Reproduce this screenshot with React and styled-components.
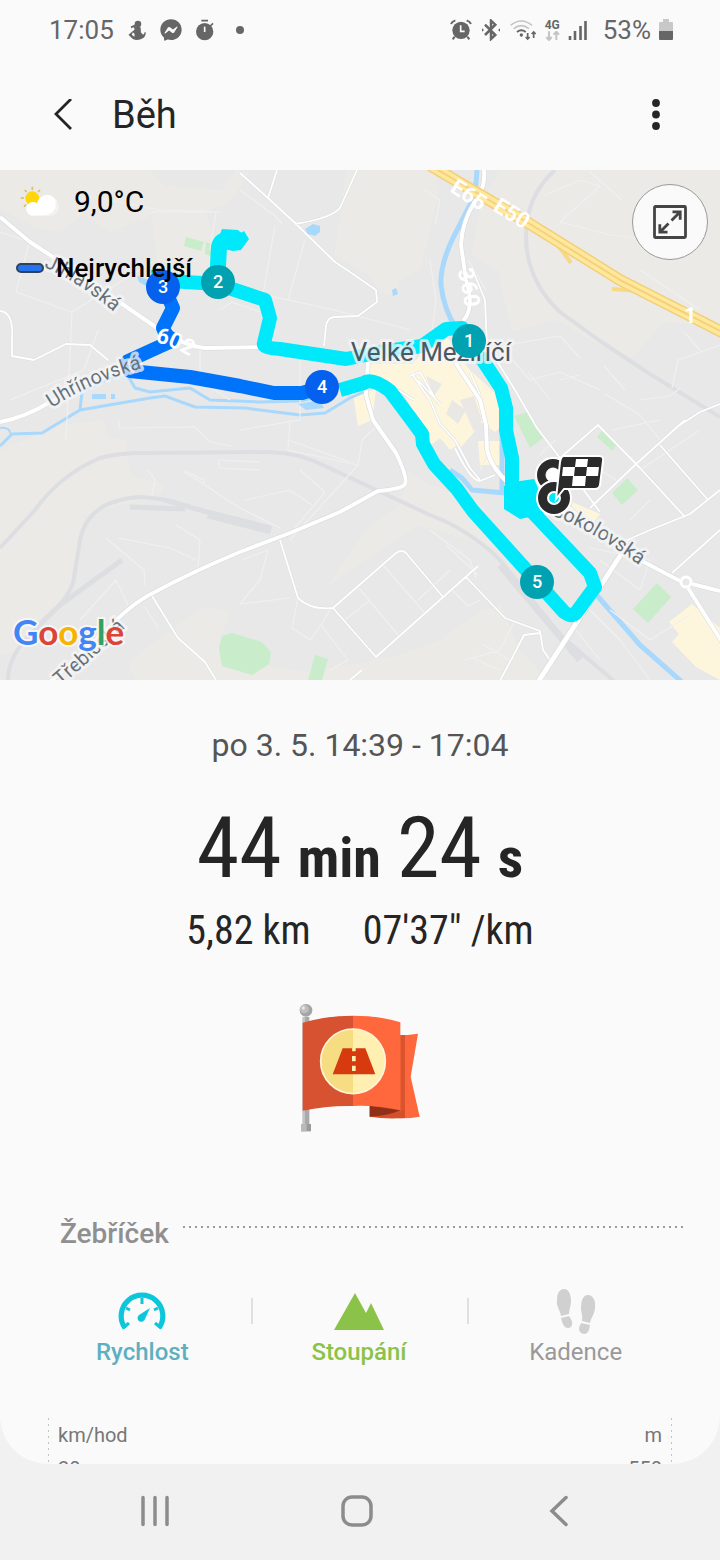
import React, { useState } from "react";
import styled, { createGlobalStyle } from "styled-components";
import { FaFacebookMessenger } from "react-icons/fa";

const creamAreas = [
  "0,170 150,170 165,186 222,190 235,170 250,172 232,200 206,212 220,262 160,300 152,215 110,232 84,215 60,232 36,228 0,208",
  "346,170 434,170 440,190 428,240 420,270 398,282 395,296 380,292 370,275 334,256 340,215",
  "500,170 720,170 720,326 664,322 632,358 598,344 556,320 512,332 498,270 472,255 480,205",
  "0,450 60,425 105,420 108,438 125,440 130,475 165,485 160,495 84,515 75,575 60,605 40,622 24,652 0,655",
  "128,662 182,622 205,607 230,612 220,640 260,665 310,672 400,655 440,640 480,612 500,604 520,650 548,680 135,680",
  "325,590 365,530 400,505 408,470 430,485 480,500 500,550 420,525 395,540 350,570",
];

const shopAreas = [
  "368,364 412,364 430,345 448,338 468,368 500,398 503,425 495,432 478,420 466,440 450,450 440,438 430,446 400,392 370,378",
  "353,394 376,390 372,420 358,426",
  "460,422 476,430 460,448",
  "478,441 500,441 500,465 480,465",
  "692,604 720,628 720,680 696,667 672,642 679,634 669,622",
  "572,502 600,514 594,522 572,508",
];

const blockAreas = [
  "380,386 402,392 410,404 396,410",
  "426,376 442,384 434,396",
  "452,400 466,410 458,424 446,414",
  "460,400 474,396 482,420 474,432",
];

const parkAreas = [
  "186,237 204,242 201,251 184,246",
  "206,242 212,244 211,256 205,254",
  "222,636 232,633 262,642 271,652 269,664 252,675 222,666 219,648",
  "315,655 328,659 322,680 308,680",
  "514,416 528,412 543,438 530,448",
  "602,431 616,445 613,451 597,437",
  "627,478 638,490 622,505 612,493",
  "657,583 671,597 648,623 633,609",
];

const faintStreets =
  "M0,232L30,242L55,262L110,300M88,196L160,210L220,212M30,240L16,292L72,312L66,440M72,312L152,262M152,212L216,212L210,250M98,330L84,370L10,400M240,190L275,216L282,224M275,226L262,300M305,240L288,300M252,292L334,310L410,330M435,225L440,200L425,190M430,260L436,300L430,345M468,260L486,290M220,310L232,302L260,312M200,345L200,380L230,400M300,345L300,420L240,430M118,420L120,428L195,427L210,442L232,446M220,460L260,462M218,460L220,468L260,470M183,470L204,480L204,484L184,472M148,470L155,480L152,495M205,485L230,502L246,511L280,528M176,525L200,540L198,568M118,538L170,548L196,560M106,538L144,570L145,586M80,620L116,580L128,605M145,607L158,628M290,420L288,450L358,465L362,440L378,425M288,440L350,462M300,470L325,492L295,528M245,500L290,490L312,505M358,465L290,540M242,560L268,550L260,580L240,604L290,598M298,598L292,628L310,640L321,625L348,660L330,670M321,625L330,610M358,587L399,636M383,565L424,612M345,620L370,600M418,600L450,570M430,530L470,560L476,578M446,545L478,575M452,590L468,606L480,600M545,195L580,180L600,186L560,222M590,172L622,200M560,222L610,235L650,240M640,270L700,310M500,345L530,380L560,372L600,390M512,344L560,336L580,358M528,372L550,400M604,366L625,390M605,394L640,415L660,440M560,380L580,375M685,333L700,350M672,388L678,360L720,345M640,400L670,396L680,388M540,455L555,440M612,430L660,420M640,470L700,430M630,520L650,500M600,470L616,480M590,548L650,560L640,590L600,560M610,610L650,640L690,615M480,470L490,450M465,660L500,650L515,620M482,644L510,660M472,658L500,670M590,610L620,640L650,680M572,625L600,660";

const minorStreets =
  "M240,173L268,198L295,223L335,262L350,272L376,290L377,302L358,316L334,317Q327,318 326,326L324,346M277,170L268,198M357,170L340,208Q332,218 295,224M0,311Q14,312 12,340L12,356L34,360L66,344L90,345L108,360M472,268L485,300L487,345L515,390L537,428L560,458L600,512M280,540L298,598Q310,610 333,608L396,553Q402,549 406,553L443,597M333,608L376,657L478,566M466,577L505,618L540,631L543,650L550,660M540,633L524,635L510,662L495,690M152,596L178,638L205,662L216,680M362,670L350,680M560,458L598,425L640,468L685,517M590,508L635,465L685,420M660,445L708,500M625,541L650,530L690,514L720,490M672,573L720,530M455,448Q470,480 480,481L495,475M412,374L430,400L440,424L455,440L470,468L480,480M418,380L440,404M410,376L420,372L436,400M680,425L700,412L720,404M470,372L480,395M398,390L414,400";

const mainRoads =
  "M0,217L30,242L70,268L160,330Q185,346 205,348L270,347M0,422Q26,417 50,402L100,375L160,345M484,170Q486,188 474,203Q462,222 461,245L466,280Q475,308 463,321M368,362L366,395L373,420L396,453Q408,478 405,484Q402,489 378,491L340,512L290,533L240,552Q190,573 155,592Q130,604 105,632L50,682M455,362L480,400L486,425L487,450Q492,470 512,486M560,500L600,535L640,560L680,581M692,584L720,591M688,588L722,642";

const rivers = [
  { d: "M477,170L475,195L453,238Q440,265 441,285Q444,310 456,328", w: 5 },
  { d: "M502,420L502,492M450,470L462,478L472,490L505,493M594,592L640,645L682,682", w: 5 },
  { d: "M0,446L12,434L42,433L80,410L115,404L150,398L165,396L195,407L245,408L300,415L325,413L350,398L366,391", w: 3 },
  { d: "M80,410L82,392L110,378L127,374L135,388L150,392L190,388L210,400L260,402L300,401L330,394", w: 3 },
  { d: "M0,428Q10,426 11,436", w: 2 },
];

const railways = [
  { d: "M555,170Q526,196 526,236Q526,280 560,312L600,341L650,374L720,417", w: 4 },
  { d: "M0,548L35,510Q60,475 100,458Q118,453 145,453L270,452Q300,453 325,466L430,515Q470,530 500,560L560,635L615,682", w: 4 },
  { d: "M8,680Q8,660 25,640L55,610Q72,592 74,578L80,540Q88,500 140,497Q165,498 185,506", w: 4 },
  { d: "M130,507L185,509M165,500L270,530", w: 5 },
  { d: "M208,514L271,530", w: 9 },
  { d: "M40,624L60,605L122,560", w: 5 },
  { d: "M500,565L580,660", w: 7 },
];

const highway = "M428,164L460,183L530,224L620,280L726,334";

const kilometres = [
  { number: 1, x: 469, y: 341, color: "#00a2b2" },
  { number: 2, x: 218, y: 282, color: "#00a2b2" },
  { number: 3, x: 163, y: 287, color: "#0560ee" },
  { number: 4, x: 322, y: 387, color: "#0560ee" },
  { number: 5, x: 537, y: 582, color: "#00a2b2" },
];

const RunnerIcon = () => (
  <svg width="18" height="20" viewBox="388 57 54 61" fill="#666" aria-hidden="true">
    <circle cx="418" cy="69" r="10" />
    <path d="M396 77l14-7 3 6-16 6zM411 77l15 2 1 16 6 6q4 2 5-7h4q0 14-12 20-8 4-18 4-10-1-14-7l-9-9 9-8q6-4 10-8l-3-8z" />
    <path d="M402 95q8 2 5 13l-8-6z" fill="#fafafa" />
  </svg>
);

const StopwatchIcon = () => (
  <svg width="18" height="22" viewBox="587 55 54 66" aria-hidden="true">
    <circle cx="613" cy="93" r="26" fill="#666" />
    <path d="M603 60h20M630 76l8-8" stroke="#666" strokeWidth="5" />
    <path d="M613 78v16" stroke="#fafafa" strokeWidth="5" />
  </svg>
);

const AlarmIcon = () => (
  <svg width="22" height="22" viewBox="270 55 66 66" aria-hidden="true">
    <circle cx="303" cy="89" r="26" fill="#666" />
    <path d="M273 70q3-8 13-11M333 70q-3-8-13-11M284 108l-6 8M322 108l6 8" stroke="#666" strokeWidth="6" fill="none" />
    <path d="M302 74v18h12" stroke="#fafafa" strokeWidth="5" fill="none" />
  </svg>
);

const BluetoothIcon = () => (
  <svg width="22" height="22" viewBox="360 55 66 66" fill="none" aria-hidden="true">
    <path d="M375 72l31 31-13 12V60l13 12-31 31" stroke="#666" strokeWidth="7.500" />
    <path d="M366 83l6 5-6 5zM420 83l-6 5 6 5z" fill="#666" />
  </svg>
);

const WifiIcon = () => (
  <svg width="27" height="22" viewBox="449 53 81 66" fill="none" aria-hidden="true">
    <path d="M451 72q32-26 64 0M460 82q23-18 46 0" stroke="#c4c4c4" strokeWidth="5" />
    <path d="M470 92q13-10 26 0" stroke="#666" strokeWidth="6" />
    <circle cx="483" cy="101" r="5" fill="#666" />
    <path d="M502 95v18M496 107l6 6 6-6M520 110v-18M514 98l6-6 6 6" stroke="#666" strokeWidth="5" />
  </svg>
);

const MobileDataArrows = () => (
  <svg width="15" height="10" viewBox="556 93 45 30" fill="none" aria-hidden="true">
    <path d="M568 94v25M560 111l8 9 8-9M590 120v-25M582 104l8-9 8 9" stroke="#c4c4c4" strokeWidth="6" />
  </svg>
);

const SignalIcon = () => (
  <svg width="19" height="20" viewBox="0 0 19 20" aria-hidden="true">
    <path d="M2 16v4M7 11v9M12.500 6v14M17.500 1v19" stroke="#666" strokeWidth="2.600" />
  </svg>
);

const BatteryIcon = () => (
  <svg width="14" height="22" viewBox="0 0 14 22" aria-hidden="true">
    <path d="M4 0h6v3h3a1 1 0 0 1 1 1v8H0V4a1 1 0 0 1 1-1h3z" fill="#c8c8c8" />
    <path d="M0 12h14v8a1 1 0 0 1-1 1H1a1 1 0 0 1-1-1z" fill="#666" />
  </svg>
);

const BackIcon = () => (
  <svg width="20" height="32" viewBox="0 0 20 32" fill="none" aria-hidden="true">
    <path d="M19 0L4 15l15 15" stroke="#252525" strokeWidth="2.800" />
  </svg>
);

const MoreIcon = () => (
  <svg width="8" height="32" viewBox="0 0 8 32" fill="#252525" aria-hidden="true">
    <circle cx="4" cy="4" r="3.900" />
    <circle cx="4" cy="15.500" r="3.900" />
    <circle cx="4" cy="27" r="3.900" />
  </svg>
);

const WeatherIcon = () => (
  <svg width="40" height="32" viewBox="58 64 120 96" aria-hidden="true">
    <path d="M95 66v10M72 76l6 6M60 100h10M70 126l6-6M118 76l-6 6M129 99h-8" stroke="#dfbf56" strokeWidth="5" />
    <circle cx="95" cy="101" r="21" fill="#ffd60a" />
    <path d="M97 153a20 20 0 0 1 0-41q8 0 12 4a31 31 0 1 1 34 37z" fill="#fff" />
    <path d="M116 151q36 4 48-20 4-12-2-24 14 12 12 26-4 18-24 20H98z" fill="#f4f2ef" />
  </svg>
);

const ExpandIcon = () => (
  <svg width="34" height="34" viewBox="0 0 34 34" fill="none" stroke="#444" aria-hidden="true">
    <rect x="1.500" y="1.500" width="31" height="31" rx="1" strokeWidth="2.800" />
    <path d="M18.500 15.500l8-8M19.500 6.800h7.700v8M15.500 18.500l-8 8M14.500 27.200H6.800v-8" strokeWidth="2.800" />
  </svg>
);

const FlagBadge = () => (
  <svg width="122" height="130" viewBox="55 38 366 390" role="img" aria-label="Odznak vzdálenosti">
    <path d="M66 80h20v325H66z" fill="#a9a9a9" />
    <path d="M66 80h7v325h-7z" fill="#c4c4c4" />
    <path d="M61 401h30v22H61z" fill="#9a9a9a" />
    <path d="M61 401h17v22H61z" fill="#b9b9b9" />
    <circle cx="76" cy="60" r="19" fill="#a5a5a5" />
    <circle cx="71" cy="56" r="13" fill="#bfbfbf" />
    <circle cx="68" cy="53" r="5" fill="#e6e6e6" />
    <path d="M350 135q32 0 62-5l-22 129 27 120q-40 7-67 4z" fill="#ff673c" />
    <path d="M359 134h14v249h-14z" fill="#d9532d" />
    <path d="M267 346h92v18l14-4v23q-60 4-106-4z" fill="#d4502a" />
    <path d="M267 346l92 14q-40 18-92 19z" fill="#903018" />
    <path d="M66 97q74-21 151-21v271q-76-2-151 14z" fill="#d65230" />
    <path d="M217 76q80 0 142 20v264q-72-16-142-13z" fill="#ff673c" />
    <circle cx="217" cy="213" r="97" fill="#f7dd82" />
    <path d="M217 116a97 97 0 0 1 0 194z" fill="#ffefb0" />
    <circle cx="217" cy="213" r="97" fill="none" stroke="#fff5dc" strokeWidth="5" />
    <path d="M186 174h28v9h11v-9h29l30 78H156z" fill="#d63a0e" />
    <path d="M214 197h11v16h-11zM214 226h11v16h-11z" fill="#ffefb0" />
  </svg>
);

const SpeedIcon = () => (
  <svg width="48" height="40" viewBox="0 0 48 40" fill="none" aria-hidden="true">
    <path d="M7 36A20.800 20.800 0 1 1 41 36" stroke="#0cc7dc" strokeWidth="5.200" />
    <path d="M24 6v6M8 16l4 2M40 16l-4 2M5 36l6-5M43 36l-6-5" stroke="#0cc7dc" strokeWidth="3" />
    <path d="M32 16l-5 11a3.800 3.800 0 1 1-6-4z" fill="#0cc7dc" />
  </svg>
);

const ClimbIcon = () => (
  <svg width="50" height="38" viewBox="0 0 50 38" fill="#8bc34a" aria-hidden="true">
    <path d="M0 37L21 0l11 20 5-10 13 27z" />
  </svg>
);

const StepsIcon = () => (
  <svg width="40" height="46" viewBox="0 0 40 46" fill="#d0d0d0" aria-hidden="true">
    <path d="M8 0c5 0 7 6 7 12 0 5-2 8-2 13L5 27C4 21 0 17 1 11 1 5 3 0 8 0zM5 29l8-2q4 5 3 9-1 3-4 3-5 0-7-10z" />
    <path d="M32 6c5 0 8 6 7 12 0 7-4 10-5 16l-8-2c1-5-1-8-1-13 0-7 2-13 7-13zM25 34l9 2q-1 9-6 9-5-1-5-5 0-2 2-6z" />
  </svg>
);

const tabs = [
  { key: "speed", label: "Rychlost", color: "#5eb0bf", weight: 500, icon: SpeedIcon },
  { key: "climb", label: "Stoupání", color: "#8bc34a", weight: 500, icon: ClimbIcon },
  { key: "cadence", label: "Kadence", color: "#999", weight: 400, icon: StepsIcon },
];

const RouteMap = () => (
  <MapDrawing viewBox="0 170 720 510" role="img" aria-label="Mapa trasy, Velké Meziříčí">
    <defs>
      <path id="jihlavska" d="M44,267Q80,282 126,322" />
      <path id="uhrinovska" d="M52,408Q92,381 150,366" />
      <path id="sokolovska" d="M551,515Q602,534 658,580" />
      <path id="trebicska" d="M61,686Q98,654 146,608" />
      <path id="road602" d="M155,342Q178,347 204,366" />
      <path id="road360" d="M457,271Q464,290 466,322" />
      <path id="e65" d="M449,191L496,221" />
      <path id="e50" d="M492,210L544,242" />
    </defs>
    <rect y="170" width="720" height="510" fill="#e8e8e8" />
    {creamAreas.map((points) => (
      <polygon key={points} points={points} fill="#ebeae6" />
    ))}
    {shopAreas.map((points) => (
      <polygon key={points} points={points} fill="#fef6dc" />
    ))}
    {blockAreas.map((points) => (
      <polygon key={points} points={points} fill="#e9e8e5" />
    ))}
    {parkAreas.map((points) => (
      <polygon key={points} points={points} fill="#c9ecca" />
    ))}
    <g fill="none" strokeLinejoin="round">
      {railways.map((rail) => (
        <path key={rail.d} d={rail.d} stroke="#dddee1" strokeWidth={rail.w} />
      ))}
      {rivers.map((river) => (
        <path key={river.d} d={river.d} stroke="#a9d8fd" strokeWidth={river.w} />
      ))}
      <path d={faintStreets} stroke="#f0f0f0" strokeWidth="1.200" />
      <path d={minorStreets} stroke="#dcdee0" strokeWidth="2.800" />
      <path d={minorStreets} stroke="#fff" strokeWidth="1.800" />
      <path d={mainRoads} stroke="#d5d7da" strokeWidth="5" />
      <path d="M622,553L538,682" stroke="#d5d7da" strokeWidth="6" />
      <path d={mainRoads} stroke="#fff" strokeWidth="4" />
      <path d="M622,553L538,682" stroke="#fff" strokeWidth="5" />
      <circle cx="686" cy="582" r="5" fill="#e8e8e8" stroke="#fff" strokeWidth="3" />
      <path d="M558,245L571,263M612,289L640,291" stroke="#f8d983" strokeWidth="4" />
      <path d={highway} stroke="#f3cf78" strokeWidth="12" />
      <path d={highway} stroke="#ffe79b" strokeWidth="9" />
      <path d={highway} stroke="#f3d27e" strokeWidth="2" />
    </g>
    <path d="M305,229l8-5 7 2v6l-5 4-7-2zM392,290l4-2 2 6-5 2zM92,394h14v5H92zM111,394h4v5h-4zM298,404l22-4 4 8-18 2zM137,276l12 4 4 10-14-8z" fill="#a9d8fd" />
    <RouteLine d="M158,270Q158,280 170,281L217,284L265,300L270,318L264,343Q262,348 280,349L346,359L380,352L422,346L446,329L462,328L476,350L501,388L506,408L506,430L512,458L512,492" color="#00e9fb" />
    <RouteLine d="M217,284L219,247Q221,237 240,240" color="#00e9fb" $width={16} />
    <path d="M222,229l16 1 3 3 3-2 5 8-8 11-8 1-18-4z" fill="#00e9fb" />
    <RouteLine d="M523,502L590,573L595,587L576,613Q572,618 564,612L537,582L473,511L457,489L434,464L423,444L422,434L411,419L390,391Q372,377 364,383L340,390" color="#00e9fb" />
    <path d="M504,486l16-5 14-2 8 18 2 20-14 0-10 2-16-10z" fill="#00e9fb" />
    <RouteLine d="M165,290L173,308L163,328Q166,337 174,340L128,361L130,371L190,377L240,386L274,393H302L322,387" color="#0073fb" />

    <RoadNumber>
      <textPath href="#road602">602</textPath>
    </RoadNumber>
    <RoadNumber>
      <textPath href="#road360">360</textPath>
    </RoadNumber>
    <RoadNumber>
      <textPath href="#e65">E65</textPath>
    </RoadNumber>
    <RoadNumber>
      <textPath href="#e50">E50</textPath>
    </RoadNumber>
    <RoadNumber x="684" y="323">1</RoadNumber>
    <StreetName>
      <textPath href="#jihlavska">Jihlavská</textPath>
    </StreetName>
    <StreetName>
      <textPath href="#uhrinovska">Uhřínovská</textPath>
    </StreetName>
    <StreetName>
      <textPath href="#sokolovska">Sokolovská</textPath>
    </StreetName>
    <StreetName>
      <textPath href="#trebicska">Třebíčská</textPath>
    </StreetName>
    <TownName x="431" y="361">
      Velké Meziříčí
    </TownName>

    {kilometres.map((km) => (
      <g key={km.number}>
        <circle cx={km.x} cy={km.y} r="17" fill={km.color} />
        <KilometreNumber x={km.x} y={km.y + 6}>
          {km.number}
        </KilometreNumber>
      </g>
    ))}

    <g stroke="#fff">
      <circle cx="553" cy="475" r="17" fill="#2b2b2b" strokeWidth="2" />
      <circle cx="553" cy="475" r="7" fill="#fff" />
      <circle cx="554" cy="498" r="17" fill="#2b2b2b" strokeWidth="2" />
      <circle cx="554" cy="498" r="6" fill="#00e9fb" strokeWidth="2" />
      <path d="M564,456h35q5,0 4,5l-3,24q-1,4-5,4h-31l-8,10 4,-37q1,-6 4,-6z" fill="#2b2b2b" strokeWidth="2" />
    </g>
    <path d="M576,459h12l-1,8h12l-1,9h-12l-1,10h-13l1,-10h-11l1,-9h12z" fill="#fff" />
    <path d="M575,467h12l-1,9h-12z" fill="#2b2b2b" />

    <GoogleMark x="13" y="645">
      <tspan fill="#4285f4">G</tspan>
      <tspan fill="#db4437">o</tspan>
      <tspan fill="#f4b400">o</tspan>
      <tspan fill="#4285f4">g</tspan>
      <tspan fill="#34a060">l</tspan>
      <tspan fill="#db4437">e</tspan>
    </GoogleMark>
  </MapDrawing>
);

export default function App() {
  const [activeTab, setActiveTab] = useState("climb");

  return (
    <>
      <GlobalStyle />
      <Phone>
        <Screen>
          <StatusBar>
            <StatusGroup $gap={14}>
              <StatusText>17:05</StatusText>
              <RunnerIcon />
              <FaFacebookMessenger size={22} />
              <StopwatchIcon />
              <StatusDot />
            </StatusGroup>
            <StatusGroup $gap={8}>
              <AlarmIcon />
              <BluetoothIcon />
              <WifiIcon />
              <MobileData>
                4G
                <MobileDataArrows />
              </MobileData>
              <SignalIcon />
              <BatteryLevel>53%</BatteryLevel>
              <BatteryIcon />
            </StatusGroup>
          </StatusBar>

          <Header>
            <IconButton aria-label="Zpět">
              <BackIcon />
            </IconButton>
            <Title>Běh</Title>
            <IconButton aria-label="Další možnosti">
              <MoreIcon />
            </IconButton>
          </Header>

          <MapSection>
            <RouteMap />
            <MapInfo>
              <Temperature>
                <WeatherIcon />
                9,0°C
              </Temperature>
              <Legend>
                <LegendSwatch />
                Nejrychlejší
              </Legend>
            </MapInfo>
            <ExpandButton aria-label="Zvětšit mapu">
              <ExpandIcon />
            </ExpandButton>
          </MapSection>

          <Summary>
            <WorkoutDate>po 3. 5. 14:39 - 17:04</WorkoutDate>
            <Duration>
              <span>44</span>
              <Unit>min</Unit>
              <span>24</span>
              <Unit>s</Unit>
            </Duration>
            <Stats>
              <span>5,82 km</span>
              <span>07'37" /km</span>
            </Stats>
            <FlagBadge />
          </Summary>

          <SectionHeading>
            <SectionTitle>Žebříček</SectionTitle>
            <DottedLine />
          </SectionHeading>
          <Tabs>
            {tabs.map((tab) => (
              <TabButton
                key={tab.key}
                aria-pressed={activeTab === tab.key}
                onClick={() => setActiveTab(tab.key)}
                $color={tab.color}
                $weight={tab.weight}
              >
                <TabIcon>
                  <tab.icon />
                </TabIcon>
                {tab.label}
              </TabButton>
            ))}
          </Tabs>
          <Chart>
            <Axis>
              <span>km/hod</span>
              <span>20</span>
            </Axis>
            <Axis $right>
              <span>m</span>
              <span>550</span>
            </Axis>
          </Chart>
        </Screen>

        <NavigationBar>
          <NavButton aria-label="Poslední aplikace">
            <svg width="32" height="32" viewBox="0 0 32 32" fill="none" aria-hidden="true">
              <path d="M5 2.500v27M17 2.500v27M29 2.500v27" stroke="#8c8c8c" strokeWidth="3.500" strokeLinecap="round" />
            </svg>
          </NavButton>
          <NavButton aria-label="Domů">
            <svg width="32" height="32" viewBox="0 0 32 32" fill="none" aria-hidden="true">
              <rect x="2" y="2" width="28" height="28" rx="9" stroke="#8c8c8c" strokeWidth="3.500" />
            </svg>
          </NavButton>
          <NavButton aria-label="Zpět">
            <svg width="32" height="32" viewBox="0 0 32 32" fill="none" aria-hidden="true">
              <path d="M22 2.500L8 16l14 13.500" stroke="#8c8c8c" strokeWidth="3.500" strokeLinecap="round" />
            </svg>
          </NavButton>
        </NavigationBar>
      </Phone>
    </>
  );
}

const GlobalStyle = createGlobalStyle`
  body {
    margin: 0;
    background-color: #f1f1f1;
    font-family: Roboto, sans-serif;
    color: #252525;
  }

  button {
    padding: 0;
    border: none;
    background: none;
    font-family: inherit;
    cursor: pointer;
  }

  svg {
    display: block;
    flex-shrink: 0;
  }
`;

const Phone = styled.div`
  display: flex;
  flex-direction: column;
  height: 100vh;
`;

const Screen = styled.main`
  flex: 1;
  min-height: 0;
  overflow: hidden;
  background-color: #fafafa;
  border-radius: 0 0 48px 48px;
`;

const StatusBar = styled.div`
  display: flex;
  align-items: center;
  justify-content: space-between;
  height: 60px;
  padding: 0 47px 0 49px;
  color: #666;
`;

const StatusGroup = styled.div`
  display: flex;
  align-items: center;
  gap: ${(props) => props.$gap}px;
`;

const StatusText = styled.span`
  font-size: 26px;
`;

const BatteryLevel = styled(StatusText)`
  margin-left: 8px;
`;

const StatusDot = styled.span`
  width: 8px;
  height: 8px;
  margin-left: 8px;
  border-radius: 50%;
  background-color: #666;
`;

const MobileData = styled.span`
  display: flex;
  flex-direction: column;
  align-items: center;
  font-size: 12px;
  font-weight: 700;
  line-height: 12px;
`;

const Header = styled.header`
  display: flex;
  align-items: center;
  height: 110px;
  padding: 0 40px 0 38px;
  box-sizing: border-box;
`;

const IconButton = styled.button`
  display: flex;
  align-items: center;
  justify-content: center;
  width: 48px;
  height: 48px;
`;

const Title = styled.h1`
  flex: 1;
  margin: 0 0 0 26px;
  font-size: 38px;
  font-weight: 400;
`;

const MapSection = styled.section`
  position: relative;
`;

const MapDrawing = styled.svg`
  width: 100%;
  height: auto;
`;

const RouteLine = styled.path.attrs((props) => ({ stroke: props.color }))`
  fill: none;
  stroke-width: ${(props) => props.$width || 14}px;
  stroke-linejoin: round;
`;

const StreetName = styled.text`
  font-size: 20px;
  fill: #66717b;
  stroke: rgba(245, 245, 245, 0.75);
  stroke-width: 6px;
  stroke-linejoin: round;
  paint-order: stroke;
`;

const TownName = styled(StreetName)`
  font-size: 26px;
  fill: #4b5763;
  text-anchor: middle;
`;

const RoadNumber = styled.text`
  font-size: 22px;
  font-weight: 700;
  fill: #fff;
`;

const KilometreNumber = styled.text`
  font-size: 18px;
  font-weight: 500;
  fill: #fff;
  text-anchor: middle;
`;

const GoogleMark = styled.text`
  font-family: Lato, sans-serif;
  font-size: 35px;
  font-weight: 700;
  stroke: rgba(250, 250, 250, 0.8);
  stroke-width: 4px;
  paint-order: stroke;
`;

const MapInfo = styled.div`
  position: absolute;
  top: 14px;
  left: 16px;
  color: #000;
`;

const Temperature = styled.div`
  display: flex;
  align-items: center;
  gap: 14px;
  padding-left: 4px;
  font-size: 30px;
  line-height: 36px;
`;

const Legend = styled.div`
  display: flex;
  align-items: center;
  gap: 12px;
  margin-top: 32px;
  font-size: 26px;
  font-weight: 500;
  line-height: 32px;
`;

const LegendSwatch = styled.span`
  width: 28px;
  height: 10px;
  box-sizing: border-box;
  border: 2px solid #2e415e;
  border-radius: 5px;
  background-color: #2573ee;
`;

const ExpandButton = styled.button`
  position: absolute;
  top: 14px;
  right: 12px;
  display: flex;
  align-items: center;
  justify-content: center;
  width: 76px;
  height: 76px;
  && {
    border: 1px solid #999;
    background-color: #fafafa;
  }
  border-radius: 50%;
`;

const Summary = styled.section`
  display: flex;
  flex-direction: column;
  align-items: center;
  padding-top: 45px;
`;

const WorkoutDate = styled.p`
  margin: 0;
  font-size: 32px;
  line-height: 40px;
  color: #555;
`;

const Duration = styled.p`
  display: flex;
  align-items: baseline;
  gap: 16px;
  margin: 35px 0 0;
  font-family: "Roboto Condensed", "Liberation Sans Narrow", Roboto, sans-serif;
  font-size: 86px;
  line-height: 96px;
`;

const Unit = styled.span`
  font-size: 56px;
  font-weight: 700;
`;

const Stats = styled.p`
  display: flex;
  gap: 52px;
  margin: 1px 0 48px;
  font-family: "Roboto Condensed", "Liberation Sans Narrow", Roboto, sans-serif;
  font-size: 40px;
  line-height: 48px;
`;

const SectionHeading = styled.div`
  display: flex;
  gap: 14px;
  margin-top: 83px;
  padding: 0 36px 0 60px;
`;

const SectionTitle = styled.h2`
  margin: 0;
  font-size: 28px;
  font-weight: 500;
  line-height: 36px;
  color: #8f8f8f;
`;

const DottedLine = styled.div`
  flex: 1;
  height: 2px;
  margin-top: 10px;
  background: repeating-linear-gradient(
    to right,
    #9a9a9a 0 2px,
    transparent 2px 6px
  );
`;

const Tabs = styled.div`
  display: flex;
  margin-top: 36px;
  padding: 0 36px 0 34px;
`;

const TabButton = styled.button`
  position: relative;
  flex: 1;
  font-size: 24px;
  font-weight: ${(props) => props.$weight};
  line-height: 32px;
  color: ${(props) => props.$color};

  &:not(:first-child)::before {
    content: "";
    position: absolute;
    top: 10px;
    left: 0;
    width: 2px;
    height: 26px;
    background-color: #e0e0e0;
  }
`;

const TabIcon = styled.span`
  display: flex;
  align-items: center;
  justify-content: center;
  height: 48px;
`;

const Chart = styled.section`
  display: flex;
  justify-content: space-between;
  margin: 50px 48px 0;
`;

const Axis = styled.div`
  display: flex;
  flex-direction: column;
  gap: 8px;
  padding: ${(props) => (props.$right ? "4px 10px 0 0" : "4px 0 0 10px")};
  background: repeating-linear-gradient(
      to bottom,
      #c4c4c4 0 2px,
      transparent 2px 6px
    )
    ${(props) => (props.$right ? "right" : "left")} top / 1px 100% no-repeat;
  font-size: 20px;
  line-height: 26px;
  text-align: ${(props) => (props.$right ? "right" : "left")};
  color: #777;
`;

const NavigationBar = styled.nav`
  display: flex;
  align-items: center;
  justify-content: space-around;
  height: 94px;
  padding: 0 59px 2px 53px;
`;

const NavButton = styled.button`
  display: flex;
  align-items: center;
  justify-content: center;
  width: 96px;
  height: 64px;
`;
